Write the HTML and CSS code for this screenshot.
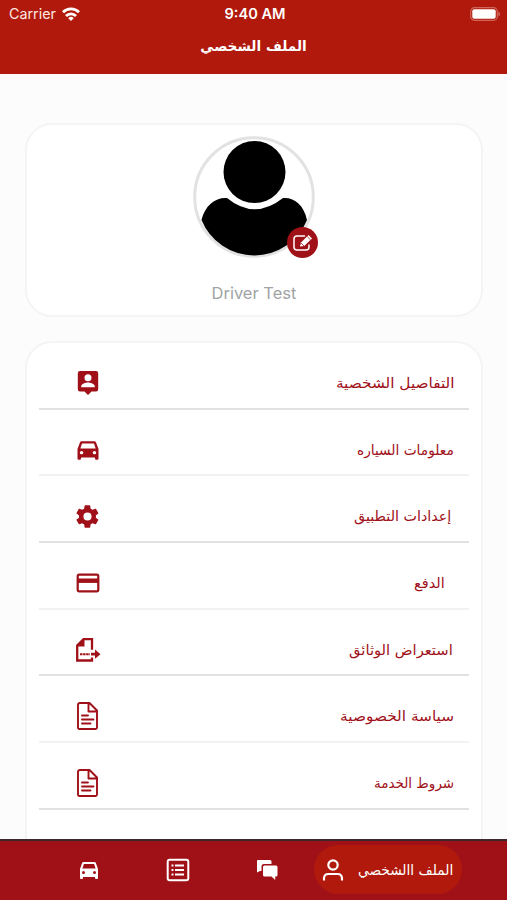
FILE: index.html
```html
<!DOCTYPE html>
<html lang="ar">
<head>
<meta charset="utf-8">
<title>الملف الشخصي</title>
<link rel="stylesheet" href="styles.css">
</head>
<body>
<svg width="0" height="0" class="defs">
  <symbol id="car" viewBox="0 0 24 24"><path fill-rule="evenodd" d="M18.900 5a1.500 1.500 0 0 0-1.400-1h-11a1.500 1.500 0 0 0-1.400 1L3 11v9a1 1 0 0 0 1 1h1a1 1 0 0 0 1-1v-1h12v1a1 1 0 0 0 1 1h1a1 1 0 0 0 1-1v-9zM6.900 6h10.200l1.500 4.500H5.400zM6.500 13a1.500 1.500 0 1 1 0 3 1.500 1.500 0 0 1 0-3zm11 0a1.500 1.500 0 1 1 0 3 1.500 1.500 0 0 1 0-3z"/></symbol>
  <symbol id="doc" viewBox="0 0 22 28"><path fill="none" stroke="currentColor" stroke-width="1.900" stroke-linejoin="round" stroke-linecap="round" d="M3 1h9.500L20 8.500v17q0 1.500-1.500 1.500h-16Q1 27 1 25.500V3q0-2 2-2zM11.500 1.500V9.500h8M5 13.500h6M5 17.500h11.500M5 21.500h8.500"/></symbol>
</svg>
<div class="screen">
  <header class="top">
    <div class="status" dir="ltr">
      <div class="carrier"><span>Carrier</span>
        <svg width="18" height="14" viewBox="0 0 18 14" fill="none" stroke="currentColor" stroke-width="2.800"><path d="M1 5.200a11.500 11.500 0 0 1 16 0M4 8.900a7 7 0 0 1 10 0"/><path d="M9 14 6.200 11.200a4 4 0 0 1 5.600 0z" fill="currentColor" stroke="none"/></svg>
      </div>
      <div class="clock">9:40 AM</div>
      <div class="power"><svg width="31" height="14" viewBox="0 0 31 14"><rect x=".7" y=".7" width="26.600" height="12.600" rx="3.800" fill="none" stroke="#d0665b" stroke-width="1.200"/><rect x="2.300" y="2.300" width="23.400" height="9.400" rx="2" fill="#fff"/><path d="M28.500 4.500q3 2.500 0 5z" fill="#d77b70"/></svg></div>
    </div>
    <h1><span>الملف الشخصي</span></h1>
  </header>
  <main>
    <section class="card profile">
      <div class="avatar">
        <svg width="122" height="122" viewBox="0 0 122 122"><circle cx="61" cy="61" r="59.300" fill="#fff" stroke="#e2e2e2" stroke-width="3"/><circle cx="61.500" cy="36" r="31"/><path d="M34 62Q61.500 84.500 90 62C101 61 111 69 114 84A57 57 0 0 1 8.500 84C12 69 23 61 34 62z"/></svg>
        <span class="edit"><svg width="22" height="20" viewBox="0 0 22 20"><path d="M12.500 3H5Q2 3 2 6v8q0 3 3 3h9q3 0 3-3v-2" fill="none" stroke="#fff" stroke-width="1.500" stroke-linecap="round"/><path d="M8 13.500 9 9.500 16.500 2l3.500 3.500-7.800 7.500z" fill="#fff"/><path d="m15.200 3.500 3.300 3.300M9 10l3 3" stroke="#9f1117" stroke-width=".8"/></svg></span>
      </div>
      <div class="name">Driver Test</div>
    </section>
    <section class="card menu">
      <div class="row"><svg width="22" height="26" viewBox="0 0 22 26"><path fill-rule="evenodd" d="M3 1h16q2.200 0 2.200 2.200v16q0 2.200-2.200 2.200h-4.500L11 25l-3.500-3.600H3Q.8 21.400.8 19.200v-16Q.8 1 3 1zM11 4.200a3.500 3.500 0 1 0 0 7 3.500 3.500 0 0 0 0-7zM4.200 17.300h13.600v-1c0-2.500-4.600-3.800-6.800-3.800s-6.800 1.300-6.800 3.800z"/></svg><span class="w1">التفاصيل الشخصية</span></div>
      <div class="row"><svg width="28" height="26" viewBox="0 0 24 24" preserveAspectRatio="none"><use href="#car" width="24" height="24"/></svg><span class="w2">معلومات السياره</span></div>
      <div class="row"><svg width="27" height="27" viewBox="0 0 24 24"><path d="M19.400 13c.1-.3.100-.6.100-1s0-.7-.1-1l2.100-1.600c.2-.2.200-.4.100-.6l-2-3.500c-.1-.2-.4-.3-.6-.2l-2.500 1a7 7 0 0 0-1.700-1L14.400 2.400a.5.500 0 0 0-.5-.4h-4a.5.500 0 0 0-.5.400L9 5.100a8 8 0 0 0-1.700 1l-2.500-1c-.2-.1-.5 0-.6.200l-2 3.500c-.1.200-.1.500.1.600L4.500 11a8 8 0 0 0 0 2l-2.200 1.600c-.2.200-.2.400-.1.600l2 3.500c.1.200.4.300.6.200l2.500-1a7 7 0 0 0 1.700 1l.4 2.700c0 .2.200.4.500.4h4c.2 0 .5-.2.500-.4l.4-2.700a8 8 0 0 0 1.700-1l2.500 1c.2.100.5 0 .6-.2l2-3.500c.1-.2.100-.5-.1-.6zM12 15.600a3.600 3.600 0 1 1 0-7.200 3.600 3.600 0 0 1 0 7.200z"/></svg><span class="w3">إعدادات التطبيق</span></div>
      <div class="row"><svg width="24" height="20" viewBox="0 0 24 20"><rect x="1.700" y="1.700" width="20.600" height="16.600" rx="1.600" fill="none" stroke="currentColor" stroke-width="2.200"/><path d="M1 5.500h22v4.400H1z"/></svg><span class="w4">الدفع</span></div>
      <div class="row"><svg width="26" height="26" viewBox="0 0 26 26"><path fill="none" stroke="currentColor" stroke-width="2.300" d="M17 12.800V2.200H8.500L2.200 8.500V23.500H17v-3"/><path d="M1.500 9.500 9.500 1.500v8zM16 15.700h4v-3.200l5.500 4.800-5.500 4.500v-3.300h-4z"/><path d="M5 17.300h10" stroke="currentColor" stroke-width="2" stroke-dasharray="2.500 .6"/></svg><span class="w5">استعراض الوثائق</span></div>
      <div class="row"><svg width="22" height="28"><use href="#doc"/></svg><span class="w6">سياسة الخصوصية</span></div>
      <div class="row"><svg width="22" height="28"><use href="#doc"/></svg><span class="w7">شروط الخدمة</span></div>
    </section>
  </main>
  <nav class="tabs">
    <div class="tab"><svg width="26" height="24"><use href="#car"/></svg></div>
    <div class="tab"><svg width="24" height="24" viewBox="0 0 24 24"><rect x="1.700" y="1.700" width="20.600" height="20.600" rx="2" fill="none" stroke="currentColor" stroke-width="2"/><path d="M9 7.500h9M9 12h9M9 16.500h9M5.500 7.500h2M5.500 12h2M5.500 16.500h2" stroke="currentColor" stroke-width="1.900"/></svg></div>
    <div class="tab"><svg width="22" height="22" viewBox="0 0 22 22"><path d="M2 1h12q1.500 0 1.500 1.500V5H8Q5.500 5 5.500 7.500V12H4l-3 1.500V2q0-1 1-1z"/><path d="M8.500 6.500H20q1.500 0 1.500 1.500v8q0 1.500-1.500 1.500h-.8V21l-3.700-3.500h-7Q7 17.500 7 16V8q0-1.500 1.500-1.500z"/></svg></div>
    <div class="pill"><svg width="22" height="24" viewBox="0 0 22 24" fill="none" stroke="currentColor" stroke-width="2.200"><circle cx="11" cy="7" r="4.700"/><path d="M2 22.500v-2q0-4.500 4.500-4.500h9q4.500 0 4.500 4.500v2"/></svg><span>الملف االشخصي</span></div>
  </nav>
</div>
</body>
</html>
```
FILE: styles.css
```css
* { box-sizing: border-box; }
body { margin: 0; font-family: Inter, "DejaVu Sans", sans-serif; }
.defs { display: block; height: 0; }
svg { display: block; fill: currentColor; flex: none; }
svg[fill="none"] { fill: none; }
.screen { width: 507px; height: 900px; display: flex; flex-direction: column; overflow: hidden; background: #fcfcfc; }
.top { height: 74px; flex: none; background: #b0190b; color: #fff; }
.status { height: 27px; display: grid; grid-template-columns: 1fr auto 1fr; align-items: center; padding: 0 6px 0 9px; font-size: 14.300px; }
.carrier { display: flex; align-items: center; gap: 6px; color: #ffe6e2; }
.carrier svg { color: #fff; }
.clock { font-weight: 600; font-size: 14.600px; }
.power { justify-self: end; }
h1 { margin: 5px 0 0; font: bold 14px/28px "DejaVu Sans", sans-serif; text-align: center; }
h1 span { display: inline-block; transform: scaleX(.975); }
main { flex: 1; min-height: 0; overflow: hidden; padding: 49px 24px 0 25px; display: flex; flex-direction: column; gap: 24px; }
.card { flex: none; background: #fff; border: 2px solid #f4f4f4; border-radius: 27px; }
.profile { height: 194px; display: flex; flex-direction: column; align-items: center; padding-top: 11px; }
.avatar { position: relative; color: #000; }
.edit { position: absolute; left: 94px; top: 91px; width: 31px; height: 31px; border-radius: 50%; background: #9f1117; display: grid; place-items: center; }
.name { margin-top: 24px; color: #a0a4a4; font-size: 16.500px; line-height: 22px; }
.menu { height: 600px; padding: 0 12px; color: #a01018; }
.row { height: 66.700px; border-bottom: 2px solid #e1e1e1; display: grid; grid-template-columns: 97px 1fr; align-items: center; padding-top: 15px; }
.row:nth-child(even) { border-color: #f2f2f2; }
.row svg { justify-self: center; }
.row span { justify-self: end; margin-right: 15px; font: 14px/24px "DejaVu Sans", sans-serif; direction: rtl; white-space: nowrap; transform-origin: right center; }
.row .w1 { transform: scaleX(1.093); }
.row .w2 { transform: scaleX(.98); }
.row .w3 { margin-right: 18px; transform: scaleX(1.02); }
.row .w4 { margin-right: 24px; transform: scaleX(1.030); }
.row .w5 { margin-right: 16px; transform: scaleX(1.050); }
.row .w6 { transform: scaleX(1.095); }
.row .w7 { transform: scaleX(.965); }
.tabs { height: 61px; flex: none; border-top: 2px solid #3d282e; background: #9f1117; color: #fff; display: grid; grid-template-columns: 89px 89px 89px 148px; padding: 0 0 2px 44px; align-items: center; }
.tab { display: grid; place-items: center; }
.pill { height: 49px; border-radius: 25px; background: #b0190b; display: flex; align-items: center; justify-content: space-between; padding: 0 9px 0 8px; margin-left: 3px; width: 148px; }
.pill span { font: 14px/24px "DejaVu Sans", sans-serif; direction: rtl; white-space: nowrap; transform: scaleX(.98); transform-origin: right center; }
```
